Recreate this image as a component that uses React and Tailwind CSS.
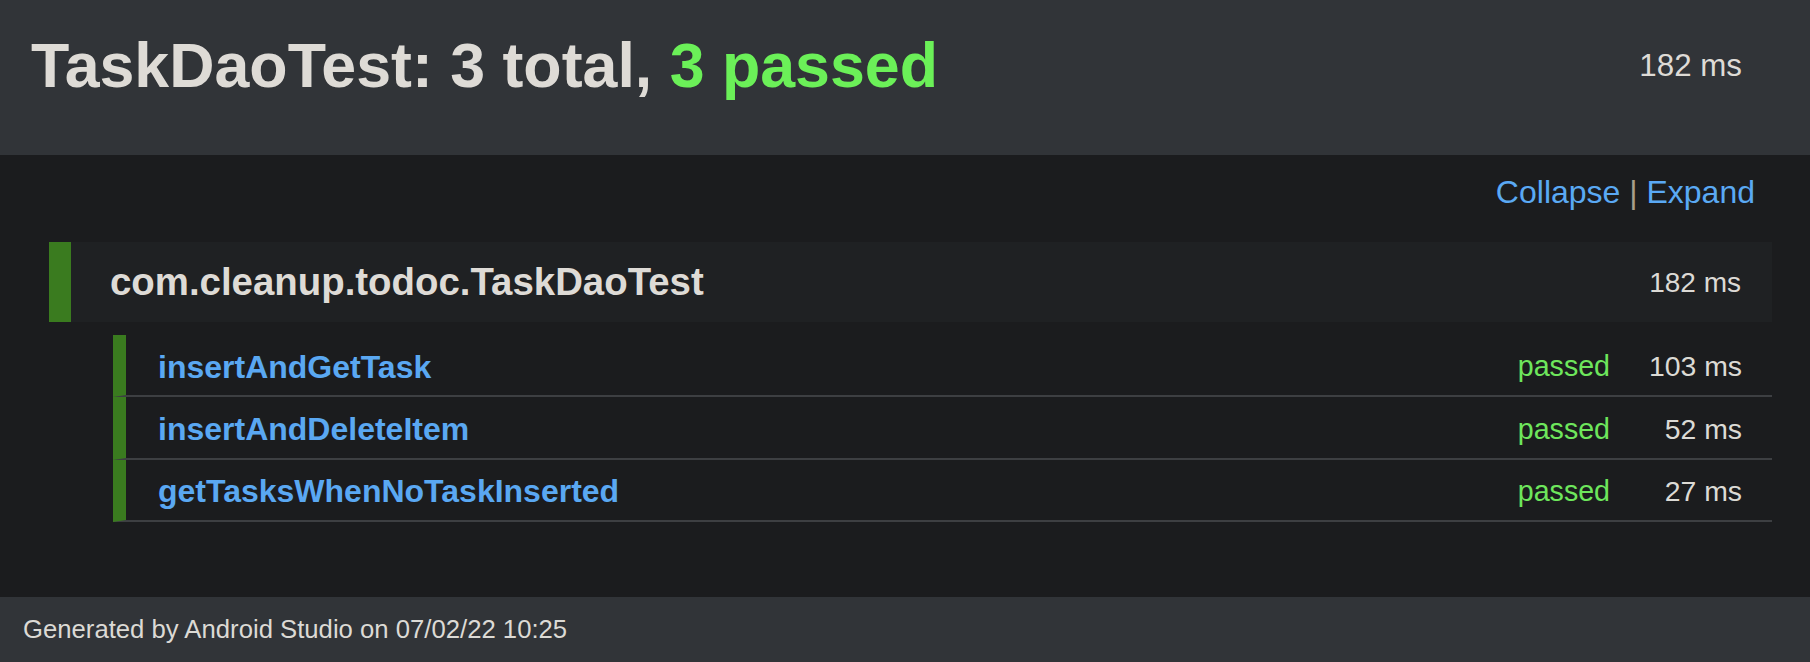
const TESTS = [
  { name: 'insertAndGetTask', result: 'passed', time: '103 ms' },
  { name: 'insertAndDeleteItem', result: 'passed', time: '52 ms' },
  { name: 'getTasksWhenNoTaskInserted', result: 'passed', time: '27 ms' },
]

function TestRow({ test }) {
  return (
    <div className="flex items-center h-[62.3px] border-l-[13px] border-b-2 border-l-[#3a7b1f] border-b-[#3d3f42] pl-[32px] pr-[30px] pt-[3px]">
      <span className="flex-1 font-bold text-[32px] text-[#5aa8f2]">{test.name}</span>
      <span className="text-[28.6px] text-[#6ee65c]">{test.result}</span>
      <span className="w-[132px] text-right text-[28.4px] text-[#dcdad5]">{test.time}</span>
    </div>
  )
}

export default function App() {
  return (
    <div className="h-screen flex flex-col bg-[#1b1c1e] font-['Liberation_Sans',Arial,sans-serif] leading-none">
      {/* Header */}
      <header className="flex items-center justify-between h-[155px] pl-[31px] pr-[68px] pb-[24px] bg-[#313438] shrink-0">
        <h1 className="font-bold text-[62.7px] leading-[63px] text-[#dedbd6]">
          TaskDaoTest: 3 total, <span className="text-[#6bf058]">3 passed</span>
        </h1>
        <span className="text-[31.3px] leading-[32px] text-[#dedbd6] pt-[1px]">182 ms</span>
      </header>

      {/* Results */}
      <main className="flex-1 pt-[21px]">
        <div className="flex justify-end pr-[55px] text-[32px] leading-[32px]">
          <span className="text-[#5aa9f4]">Collapse</span>
          <span className="text-[#a89f8c] mx-[8.9px]">|</span>
          <span className="text-[#5aa9f4]">Expand</span>
        </div>

        <div className="mt-[34px] ml-[49px] mr-[38px] h-[80px] flex items-center bg-[#1f2123] border-l-[22px] border-[#3a7b1f] pl-[39px] pr-[31px] pt-[1px]">
          <span className="flex-1 font-bold text-[38.4px] text-[#dedbd6]">com.cleanup.todoc.TaskDaoTest</span>
          <span className="text-[28px] text-[#dcdad5]">182 ms</span>
        </div>

        <div className="mt-[13px] ml-[113px] mr-[38px]">
          {TESTS.map((t) => (
            <TestRow key={t.name} test={t} />
          ))}
        </div>
      </main>

      {/* Footer */}
      <footer className="h-[65px] shrink-0 flex items-center pl-[23px] bg-[#313438] text-[25.7px] text-[#dcdad5]">
        Generated by Android Studio on 07/02/22 10:25
      </footer>
    </div>
  )
}
